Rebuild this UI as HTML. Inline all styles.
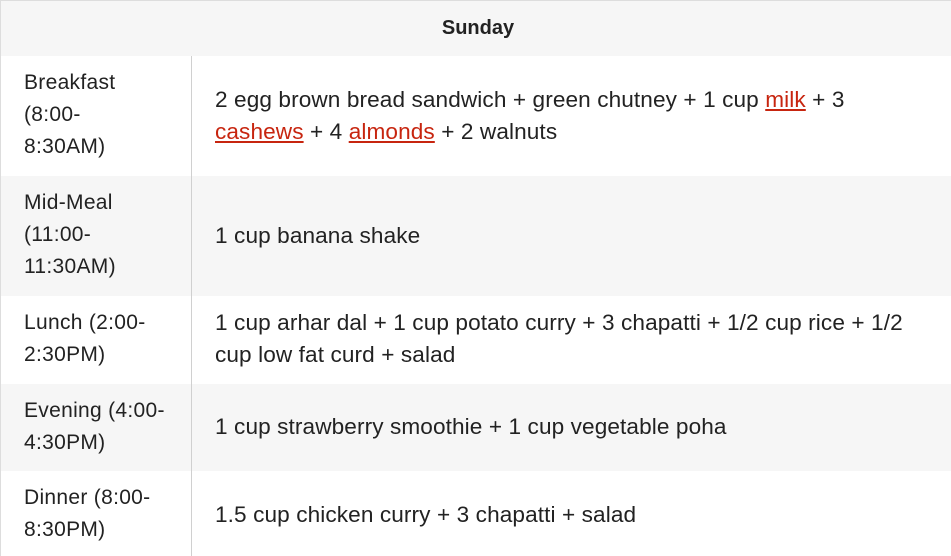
<!DOCTYPE html>
<html><head><style>
body{margin:0;width:951px;height:556px;overflow:hidden;background:#fff;font-family:"Liberation Sans",Arial,sans-serif;color:#222;font-size:20px}
.r{position:absolute;left:0;width:951px;border-left:1px solid #ddd;box-sizing:border-box}
.g{background:#f6f6f6}
.c{position:absolute;left:23px;line-height:32px;white-space:nowrap;font-size:21px;letter-spacing:0.3px}
.d{position:absolute;left:214px;line-height:32px;white-space:nowrap;font-size:22.6px;letter-spacing:0.1px}
.v{position:absolute;left:191px;top:56px;width:1px;height:500px;background:#d0d0d0}
a{color:#c7250f;text-decoration:underline}
</style></head><body>
<div class="r g" style="top:0;height:56px;border-top:1px solid #ddd"><div style="text-align:center;font-weight:bold;line-height:54px;padding-left:4px">Sunday</div></div>
<div class="r" style="top:56px;height:120px"><div class="c" style="top:11px">Breakfast<br>(8:00-<br>8:30AM)</div><div class="d" style="top:28px">2 egg brown bread sandwich + green chutney + 1 cup <a>milk</a> + 3<br><a>cashews</a> + 4 <a>almonds</a> + 2 walnuts</div></div>
<div class="r g" style="top:176px;height:120px"><div class="c" style="top:11px">Mid-Meal<br>(11:00-<br>11:30AM)</div><div class="d" style="top:44px">1 cup banana shake</div></div>
<div class="r" style="top:296px;height:88px"><div class="c" style="top:11px">Lunch (2:00-<br>2:30PM)</div><div class="d" style="top:11px">1 cup arhar dal + 1 cup potato curry + 3 chapatti + 1/2 cup rice + 1/2<br>cup low fat curd + salad</div></div>
<div class="r g" style="top:384px;height:87px"><div class="c" style="top:11px">Evening (4:00-<br>4:30PM)</div><div class="d" style="top:27px">1 cup strawberry smoothie + 1 cup vegetable poha</div></div>
<div class="r" style="top:471px;height:85px"><div class="c" style="top:11px">Dinner (8:00-<br>8:30PM)</div><div class="d" style="top:28px">1.5 cup chicken curry + 3 chapatti + salad</div></div>
<div class="v"></div>
</body></html>
